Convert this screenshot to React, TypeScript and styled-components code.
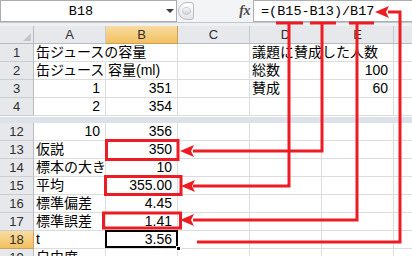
import React from 'react';
import styled, { createGlobalStyle, css } from 'styled-components';

const Global = createGlobalStyle`
  html, body { margin: 0; padding: 0; background: #ffffff; }
  body {
    width: 412px;
    height: 256px;
    overflow: hidden;
    font-family: "Liberation Sans", "Noto Sans CJK JP", sans-serif;
  }
`;

const Page = styled.div`
  position: relative;
  width: 412px;
  height: 256px;
  overflow: hidden;
  background: #ffffff;
  display: flex;
  flex-direction: column;
`;

/* ---------- formula bar ---------- */
const FormulaBar = styled.div`
  flex: none;
  display: flex;
  height: 22px;
  background: #f3f4f6;
`;

const NameBox = styled.div`
  box-sizing: border-box;
  flex: none;
  width: 177px;
  height: 22px;
  display: flex;
  align-items: center;
  background: #ffffff;
  border: 1px solid #abadb3;
`;

const NameText = styled.span`
  width: 160px;
  text-align: center;
  font-family: "Liberation Mono", monospace;
  font-size: 13.5px;
  color: #000;
`;

const DropArrow = styled.span`
  width: 0;
  height: 0;
  margin-left: 5px;
  border-left: 4px solid transparent;
  border-right: 4px solid transparent;
  border-top: 4px solid #3c3c3c;
`;

const Grip = styled.div`
  box-sizing: border-box;
  flex: none;
  width: 16px;
  height: 18px;
  margin: 2px 0 0 1px;
  border: 1px solid #b9bcc1;
  border-radius: 9px 3px 3px 9px;
  background: linear-gradient(#ffffff, #e2e4e8);
  display: flex;
  align-items: center;
  justify-content: center;
`;

const GripDot = styled.span`
  width: 7px;
  height: 6px;
  border-radius: 50%;
  background: linear-gradient(#f6f6f6, #d0d3d8);
  border: 1px solid #c8cbd0;
`;

const FxArea = styled.div`
  flex: none;
  width: 59px;
  display: flex;
  align-items: center;
  justify-content: flex-end;
  padding-right: 3px;
  box-sizing: border-box;
`;

const FxLabel = styled.span`
  font-family: "Liberation Serif", serif;
  font-style: italic;
  font-weight: bold;
  font-size: 14px;
  letter-spacing: -0.5px;
  color: #4a4a4a;
`;

const FormulaInput = styled.div`
  flex: 1;
  box-sizing: border-box;
  height: 22px;
  display: flex;
  align-items: center;
  padding-left: 7px;
  background: #ffffff;
  border: 1px solid #abadb3;
  border-right: none;
  font-family: "Liberation Mono", monospace;
  font-size: 13.5px;
  color: #000;
  white-space: nowrap;
`;

const BarGap = styled.div`
  flex: none;
  height: 4px;
  box-sizing: border-box;
  border-top: 1px solid #c3c7cd;
  background: #eef0f2;
`;

/* ---------- sheet ---------- */
const Sheet = styled.div`
  display: flex;
  flex-direction: column;
`;

const Row = styled.div`
  display: flex;
  flex: none;
  height: 18px;
`;

const headerSelected = css`
  background: linear-gradient(#f9dca3, #f1c15f);
  border-right-color: #c9a15c;
  border-bottom-color: #c9a15c;
`;

const Corner = styled.div`
  box-sizing: border-box;
  flex: none;
  width: 34px;
  height: 18px;
  background: #e6e8ec;
  border-right: 1px solid #b8bcc2;
  border-bottom: 1px solid #b8bcc2;
  display: flex;
  align-items: flex-end;
  justify-content: flex-end;
  padding: 0 2px 2px 0;
`;

const CornerTriangle = styled.span`
  width: 0;
  height: 0;
  border-left: 8px solid transparent;
  border-bottom: 8px solid #c3c7cd;
`;

const ColHeader = styled.div<{ $selected?: boolean }>`
  box-sizing: border-box;
  width: 72px;
  flex: none;
  height: 18px;
  background: #e6e8ec;
  border-right: 1px solid #c6cad0;
  border-bottom: 1px solid #b8bcc2;
  display: flex;
  align-items: center;
  justify-content: center;
  font-family: "Liberation Sans", sans-serif;
  font-size: 13px;
  color: #2f2f2f;
  ${(p) => p.$selected && headerSelected}
`;

const RowHeader = styled.div<{ $selected?: boolean }>`
  box-sizing: border-box;
  width: 34px;
  flex: none;
  height: 18px;
  background: #e6e8ec;
  border-right: 1px solid #b8bcc2;
  border-bottom: 1px solid #c9cdd2;
  display: flex;
  align-items: center;
  justify-content: center;
  font-family: "Liberation Sans", sans-serif;
  font-size: 13px;
  color: #2f2f2f;
  ${(p) => p.$selected && headerSelected}
`;

const Cell = styled.div<{ $right?: boolean; $spill?: boolean; $selected?: boolean }>`
  box-sizing: border-box;
  position: relative;
  width: 72px;
  flex: none;
  height: 18px;
  border-right: 1px solid ${(p) => (p.$spill ? 'transparent' : '#dadcdd')};
  border-bottom: 1px solid #dadcdd;
  padding: 0 ${(p) => (p.$right ? '5px' : '2px')} 0 2px;
  text-align: ${(p) => (p.$right ? 'right' : 'left')};
  font-size: 14px;
  line-height: 17px;
  color: #000;
  white-space: nowrap;
  overflow: ${(p) => (p.$spill ? 'visible' : 'hidden')};
  ${(p) =>
    p.$selected &&
    css`
      overflow: visible;
      &::after {
        content: '';
        position: absolute;
        left: -1px;
        top: -1px;
        right: -1px;
        bottom: 0;
        border: 2px solid #000;
      }
      &::before {
        content: '';
        position: absolute;
        right: -4px;
        bottom: -3px;
        width: 5px;
        height: 5px;
        background: #000;
        border: 1px solid #fff;
        box-sizing: border-box;
        z-index: 2;
      }
    `}
`;

const SplitBar = styled.div`
  flex: none;
  height: 7px;
  box-sizing: border-box;
  border-top: 1px solid #ffffff;
  background: #dce1ea;
`;

const Overlay = styled.svg`
  position: absolute;
  left: 0;
  top: 0;
  pointer-events: none;
  z-index: 10;
`;

/* ---------- data ---------- */
type CellData = { t?: string; r?: boolean; spill?: boolean };
type RowData = { n: string; cells: CellData[]; sel?: boolean };

const COLS = ['A', 'B', 'C', 'D', 'E', 'F'];

const topRows: RowData[] = [
  { n: '1', cells: [{ t: '缶ジュースの容量', spill: true }, {}, {}, { t: '議題に賛成した人数', spill: true }, {}, {}] },
  { n: '2', cells: [{ t: '缶ジュース' }, { t: '容量(ml)' }, {}, { t: '総数' }, { t: '100', r: true }, {}] },
  { n: '3', cells: [{ t: '1', r: true }, { t: '351', r: true }, {}, { t: '賛成' }, { t: '60', r: true }, {}] },
  { n: '4', cells: [{ t: '2', r: true }, { t: '354', r: true }, {}, {}, {}, {}] },
];

const bottomRows: RowData[] = [
  { n: '12', cells: [{ t: '10', r: true }, { t: '356', r: true }] },
  { n: '13', cells: [{ t: '仮説' }, { t: '350', r: true }] },
  { n: '14', cells: [{ t: '標本の大きさ' }, { t: '10', r: true }] },
  { n: '15', cells: [{ t: '平均' }, { t: '355.00', r: true }] },
  { n: '16', cells: [{ t: '標準偏差' }, { t: '4.45', r: true }] },
  { n: '17', cells: [{ t: '標準誤差' }, { t: '1.41', r: true }] },
  { n: '18', sel: true, cells: [{ t: 't' }, { t: '3.56', r: true }] },
  { n: '19', cells: [{ t: '自由度' }] },
];

const SheetRow: React.FC<{ row: RowData }> = ({ row }) => (
  <Row>
    <RowHeader $selected={row.sel}>{row.n}</RowHeader>
    {COLS.map((c, i) => {
      const d = row.cells[i] || {};
      return (
        <Cell key={c} $right={d.r} $spill={d.spill} $selected={row.sel && c === 'B'}>
          {d.t}
        </Cell>
      );
    })}
  </Row>
);

const RED = '#ed1c24';

const Arrow: React.FC<{ x: number; y: number }> = ({ x, y }) => (
  <polygon points={`${x},${y} ${x + 14},${y - 6} ${x + 11},${y} ${x + 14},${y + 6}`} fill={RED} />
);

const Annotations: React.FC = () => (
  <Overlay width={412} height={256} viewBox="0 0 412 256">
    <g stroke={RED} strokeWidth={3} fill="none">
      <path d="M276 23 H303 M310 23 H336 M349 23 H374" />
      <path d="M289 23 V186 H193" />
      <path d="M322 23 V151 H193" />
      <path d="M357 23 V220 H193" />
      <path d="M197 242 H400 V12 H388" />
      <rect x={106.5} y={140.5} width={71.5} height={19} />
      <rect x={105.5} y={176.5} width={75.5} height={18} />
      <rect x={103.5} y={213} width={77} height={15} />
    </g>
    <Arrow x={180} y={151} />
    <Arrow x={181} y={186} />
    <Arrow x={180} y={220} />
    <Arrow x={375} y={12} />
  </Overlay>
);

export default function App() {
  return (
    <Page>
      <Global />
      <FormulaBar>
        <NameBox>
          <NameText>B18</NameText>
          <DropArrow />
        </NameBox>
        <Grip>
          <GripDot />
        </Grip>
        <FxArea>
          <FxLabel>fx</FxLabel>
        </FxArea>
        <FormulaInput>=(B15-B13)/B17</FormulaInput>
      </FormulaBar>
      <BarGap />
      <Sheet>
        <Row>
          <Corner>
            <CornerTriangle />
          </Corner>
          {COLS.map((c) => (
            <ColHeader key={c} $selected={c === 'B'}>
              {c}
            </ColHeader>
          ))}
        </Row>
        {topRows.map((r) => (
          <SheetRow key={r.n} row={r} />
        ))}
        <SplitBar />
        {bottomRows.map((r) => (
          <SheetRow key={r.n} row={r} />
        ))}
      </Sheet>
      <Annotations />
    </Page>
  );
}
